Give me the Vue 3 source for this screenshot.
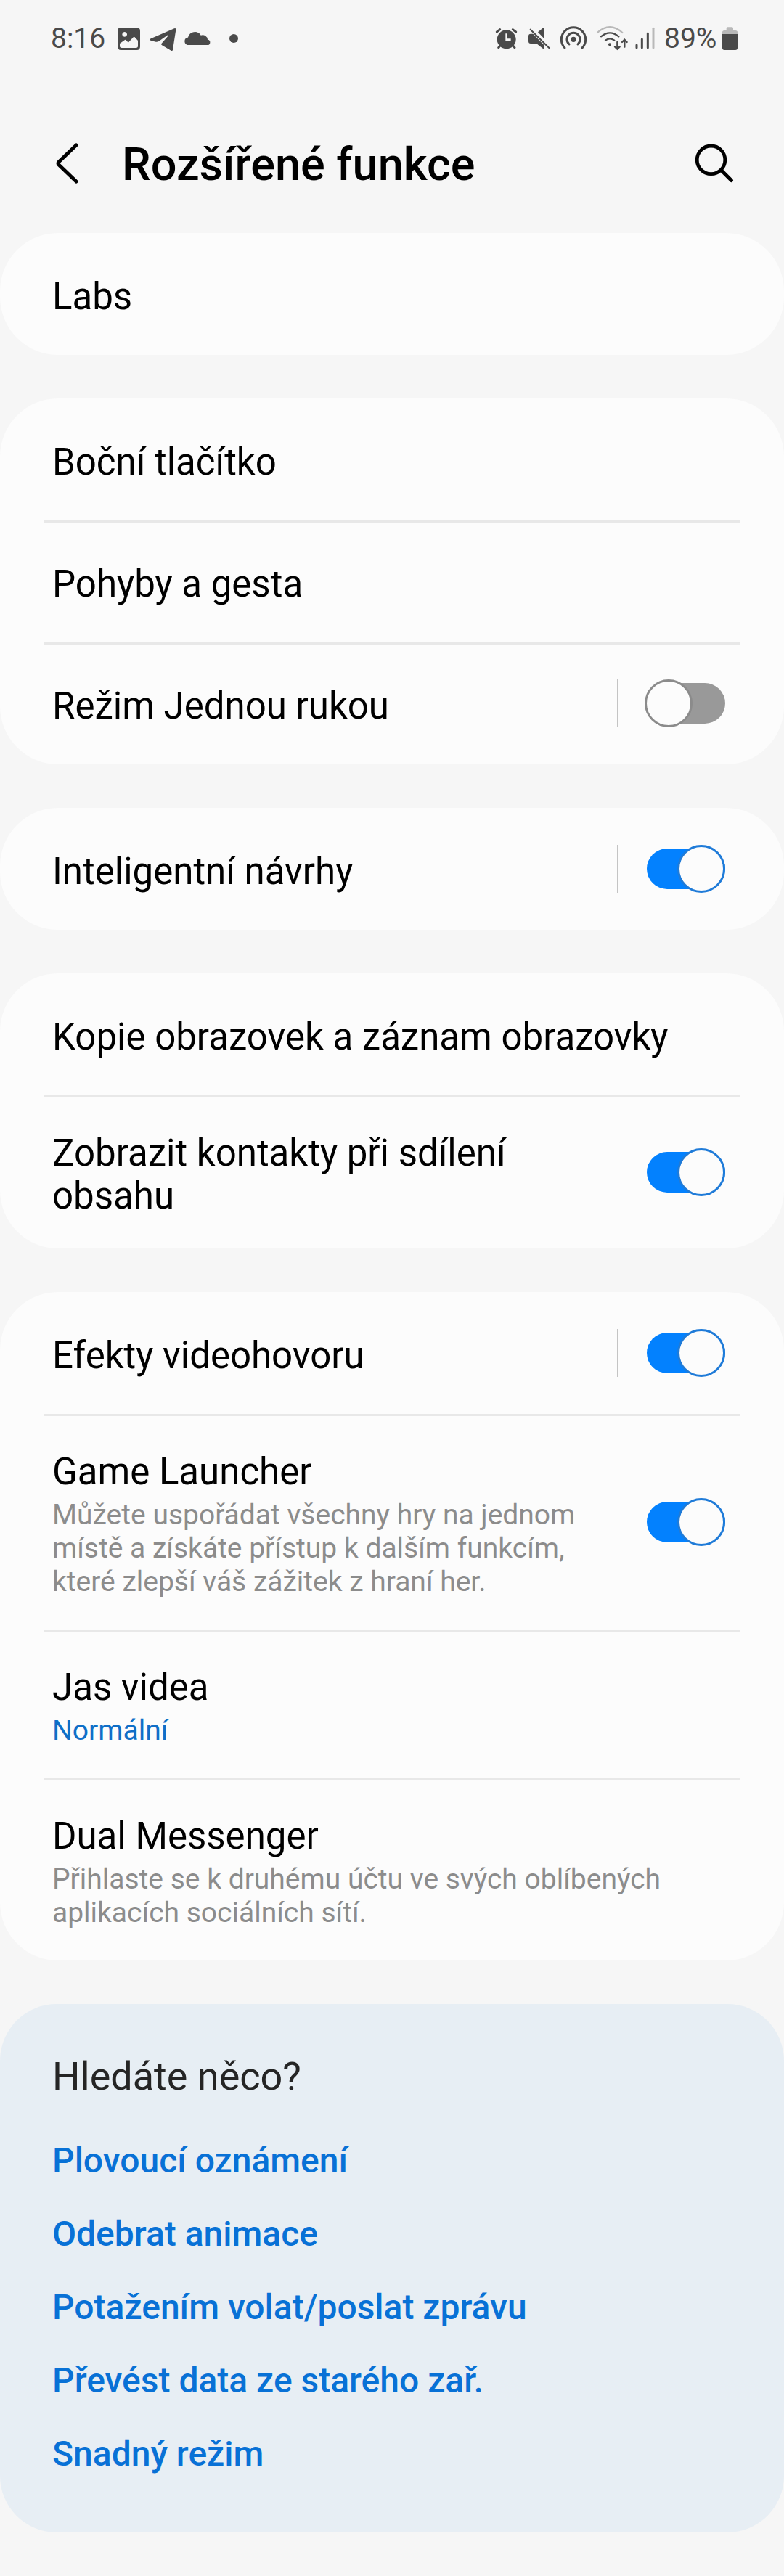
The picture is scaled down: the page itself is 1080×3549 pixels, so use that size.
<script setup>
import { ref } from 'vue'

const groups = ref([
  [{ title: 'Labs' }],
  [
    { title: 'Boční tlačítko' },
    { title: 'Pohyby a gesta' },
    { title: 'Režim Jednou rukou', split: true, toggle: true, on: false },
  ],
  [{ title: 'Inteligentní návrhy', split: true, toggle: true, on: true }],
  [
    { title: 'Kopie obrazovek a záznam obrazovky' },
    { title: 'Zobrazit kontakty při sdílení obsahu', toggle: true, on: true },
  ],
  [
    { title: 'Efekty videohovoru', split: true, toggle: true, on: true },
    {
      title: 'Game Launcher',
      summary:
        'Můžete uspořádat všechny hry na jednom místě a získáte přístup k dalším funkcím, které zlepší váš zážitek z hraní her.',
      toggle: true,
      on: true,
    },
    { title: 'Jas videa', summary: 'Normální', accent: true },
    {
      title: 'Dual Messenger',
      summary: 'Přihlaste se k druhému účtu ve svých oblíbených aplikacích sociálních sítí.',
    },
  ],
])

const links = [
  'Plovoucí oznámení',
  'Odebrat animace',
  'Potažením volat/poslat zprávu',
  'Převést data ze starého zař.',
  'Snadný režim',
]
</script>

<template>
  <div class="page">
    <div class="status">
      <div class="status-side">
        <span class="time">8:16</span>
        <svg width="32" height="34" viewBox="366 48 96 102" aria-hidden="true">
          <path fill="currentColor" fill-rule="evenodd" d="M380 54h65q14 0 14 14v65q0 14-14 14h-65q-14 0-14-14V68q0-14 14-14zM395 72a10 10 0 1 0 .1 0zM375 120v10q0 8 8 8h59q8 0 8-8v-22l-13-14q-3-3-6 0l-21 22-9-10q-3-3-6 0z" />
        </svg>
        <svg width="35" height="34" viewBox="498 48 105 102" aria-hidden="true">
          <path fill="currentColor" d="M503 100 600 58q8-3 7 5l-13 83q-1 6-7 3l-38-22q-5-3-1-8l26-30q3-6-3-3l-34 24q-6 4-13 3l-22-6q-6-3 1-7z" />
        </svg>
        <svg width="37" height="34" viewBox="639 48 111 102" aria-hidden="true">
          <path fill="currentColor" d="M655 126a16 16 0 0 1 0-31h2a29 29 0 0 1 53-9 21 21 0 0 1 28 18 11 11 0 0 1-2 22z" />
        </svg>
        <svg width="26" height="34" viewBox="786 48 78 102" aria-hidden="true">
          <circle cx="846" cy="99" r="18" fill="currentColor" />
        </svg>
      </div>
      <div class="status-side">
        <svg width="34" height="34" viewBox="63 48 102 102" aria-hidden="true">
          <circle cx="113" cy="103" r="39" fill="currentColor" />
          <path fill="none" stroke="currentColor" stroke-width="9" stroke-linecap="round" d="M73 72 86 62M139 62l13 10M86 130l-6 7M141 130l6 7" />
          <path fill="none" stroke="#f6f6f6" stroke-width="8" d="M113 79v25h18" />
        </svg>
        <svg width="32" height="34" viewBox="201 48 96 102" aria-hidden="true">
          <path fill="currentColor" d="M243 73l20-17q5-3 5 3v40zM213 80h10l45 46v11q0 6-5 3l-26-20h-24q-9 0-9-9V89q0-9 9-9z" />
          <path fill="none" stroke="currentColor" stroke-width="6" stroke-linecap="round" d="M212 62 289 138" />
        </svg>
        <svg width="38" height="34" viewBox="333 48 114 102" aria-hidden="true">
          <circle cx="390" cy="103" r="11" fill="currentColor" />
          <path fill="none" stroke="currentColor" stroke-width="9" stroke-linecap="round" d="M372 123a27 27 0 1 1 36 0M354 138a50 50 0 1 1 72 0" />
        </svg>
        <svg width="42" height="34" viewBox="483 48 126 102" aria-hidden="true">
          <path fill="none" stroke="#b9b9b9" stroke-width="7" stroke-linecap="round" d="M489 75q51-46 103 0" />
          <path fill="none" stroke="currentColor" stroke-width="7" stroke-linecap="round" d="M504 91q36-30 73 0M522 107q18-14 37 0M571 114v27M561 133l10 10 10-10M601 134v-28M591 114l10-10 10 10" />
          <circle cx="540" cy="124" r="6" fill="currentColor" />
        </svg>
        <svg width="28" height="34" viewBox="645 48 84 102" aria-hidden="true">
          <path fill="none" stroke="currentColor" stroke-width="9" stroke-linecap="round" d="M651 126v11M673 102v35M697 78v59" />
          <path fill="none" stroke="#b9b9b9" stroke-width="9" stroke-linecap="round" d="M720 58v79" />
        </svg>
        <span class="level">89%</span>
        <svg width="21" height="34" viewBox="1005 48 63 102" aria-hidden="true">
          <path fill="#b9b9b9" d="M1005 82v-8q0-8 8-8h9v-9q0-5 5-5h18q5 0 5 5v9h10q8 0 8 8v8z" />
          <path fill="currentColor" d="M1005 81h63v57q0 9-9 9h-45q-9 0-9-9z" />
        </svg>
      </div>
    </div>

    <header class="bar">
      <button class="icon-btn" type="button" aria-label="Zpět">
        <svg width="48" height="60" viewBox="0 0 48 60" aria-hidden="true">
          <path fill="none" stroke="#000" stroke-width="5" stroke-linecap="round" stroke-linejoin="round" d="M33 5 9 28q-2 2 0 4l24 23" />
        </svg>
      </button>
      <h1>Rozšířené funkce</h1>
      <button class="icon-btn" type="button" aria-label="Hledat">
        <svg width="60" height="60" viewBox="0 0 60 60" aria-hidden="true">
          <circle cx="25.5" cy="25.3" r="19.3" fill="none" stroke="#000" stroke-width="4.8" />
          <path stroke="#000" stroke-width="5" stroke-linecap="round" d="M39.5 39.5l14 14" />
        </svg>
      </button>
    </header>

    <main>
      <ul v-for="(rows, g) in groups" :key="g" class="card">
        <li v-for="(row, r) in rows" :key="row.title">
          <component :is="row.toggle ? 'label' : 'button'" class="row" :type="row.toggle ? null : 'button'" :for="row.toggle ? `switch-${g}-${r}` : null">
            <span class="text">
              <span class="title">{{ row.title }}</span>
              <span v-if="row.summary" class="summary" :class="{ accent: row.accent }">{{ row.summary }}</span>
            </span>
            <span v-if="row.split" class="split"></span>
            <input v-if="row.toggle" :id="`switch-${g}-${r}`" v-model="row.on" class="switch" type="checkbox" role="switch" />
          </component>
        </li>
      </ul>

      <section class="hints">
        <h2>Hledáte něco?</h2>
        <a v-for="link in links" :key="link" href="#">{{ link }}</a>
      </section>
    </main>
  </div>
</template>

<style>
body {
  margin: 0;
  background: #f6f6f6;
}
</style>

<style scoped>
.page {
  font-family: Roboto, sans-serif;
  color: #000;
  background: #f6f6f6;
  padding-bottom: 60px;
}

.status {
  display: flex;
  justify-content: space-between;
  align-items: center;
  height: 106px;
  padding: 0 64px 0 70px;
  color: #4a4a4a;
  font-size: 39px;
  line-height: 46px;
}

.status-side {
  display: flex;
  align-items: center;
  gap: 12px;
}

.status svg {
  flex: none;
  overflow: visible;
}

.time {
  width: 80px;
}

.level {
  width: 68px;
}

.bar {
  display: flex;
  align-items: center;
  box-sizing: border-box;
  height: 215px;
  padding: 23px 66px 0 72px;
}

.icon-btn {
  display: flex;
  flex: none;
  padding: 0;
  border: 0;
  background: none;
}

h1 {
  flex: 1;
  margin: 4px 0 0 48px;
  font-size: 63px;
  line-height: 72px;
  font-weight: 500;
}

main {
  display: flex;
  flex-direction: column;
  gap: 60px;
}

.card {
  margin: 0;
  padding: 0;
  list-style: none;
  background: #fcfcfc;
  border-radius: 80px;
}

/* The divider shares its 3px with the row beneath it. */
.card li + li::before {
  content: '';
  display: block;
  height: 3px;
  margin: 0 60px -3px;
  background: #e8e8e8;
}

.row {
  display: flex;
  align-items: center;
  box-sizing: border-box;
  width: 100%;
  min-height: 168px;
  padding: 0 81px 0 72px;
  border: 0;
  background: none;
  color: inherit;
  font: inherit;
  text-align: left;
}

button.row {
  padding-right: 72px;
}

.text {
  flex: 1;
  display: flex;
  flex-direction: column;
  gap: 7px;
  padding: 50px 0 43px;
}

.title {
  font-size: 51px;
  line-height: 59px;
}

.summary {
  font-size: 39px;
  line-height: 46px;
  color: #8c8c8c;
}

.summary.accent {
  color: #0f6fc8;
}

.split {
  width: 2px;
  height: 66px;
  background: #c4c4c4;
}

.switch {
  appearance: none;
  flex: none;
  display: flex;
  align-items: center;
  width: 108px;
  height: 56px;
  margin: 0 0 0 39px;
  border-radius: 28px;
  background: #999;
}

.switch::before {
  content: '';
  flex: none;
  box-sizing: border-box;
  width: 66px;
  height: 66px;
  margin-left: -3px;
  border: 3px solid #8b8b8b;
  border-radius: 50%;
  background: #fcfcfc;
}

.switch:checked {
  background: #0381fe;
}

.switch:checked::before {
  margin-left: 42px;
  border-color: #1f7bd8;
}

.hints {
  display: flex;
  flex-direction: column;
  align-items: flex-start;
  gap: 42px;
  padding: 68px 72px 79px;
  border-radius: 78px;
  background: #e7eef4;
}

h2 {
  margin: 0 0 13px;
  font-size: 54px;
  line-height: 63px;
  font-weight: 400;
  color: #252525;
}

.hints a {
  font-size: 48px;
  line-height: 59px;
  font-weight: 500;
  color: #0871d6;
  text-decoration: none;
}
</style>
